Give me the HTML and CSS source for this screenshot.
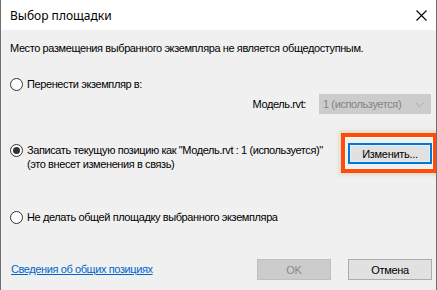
FILE: index.html
```html
<!DOCTYPE html>
<html lang="ru">
<head>
    <meta charset="UTF-8">
    <meta name="viewport" content="width=device-width, initial-scale=1.0">
    <title>Выбор площадки</title>
    <link rel="stylesheet" href="styles.css">
</head>
<body>
    <div class="window">
        <header class="titlebar">
            <span class="title">Выбор площадки</span>
            <svg class="close" width="11" height="11" viewBox="0 0 11 11">
                <path d="M0.5 0.5 L10.5 10.5 M10.5 0.5 L0.5 10.5" stroke="#000" stroke-width="1.1" fill="none"/>
            </svg>
        </header>
        <main class="content">
            <p class="notice">Место размещения выбранного экземпляра не является общедоступным.</p>

            <label class="option option-move">
                <span class="radio"></span>
                <span>Перенести экземпляр в:</span>
            </label>

            <div class="model-row">
                <span class="model-label">Модель.rvt:</span>
                <div class="combo">
                    <span>1 (используется)</span>
                    <svg width="9" height="5" viewBox="0 0 9 5">
                        <path d="M0.5 0.5 L4.5 4.5 L8.5 0.5" stroke="#a8a8a8" fill="none"/>
                    </svg>
                </div>
            </div>

            <div class="record-row">
                <label class="option option-record">
                    <span class="radio checked"></span>
                    <span class="option-text">Записать текущую позицию как "Модель.rvt : 1 (используется)"<br>(это внесет изменения в связь)</span>
                </label>
                <div class="highlight-wrap">
                    <button class="btn btn-focus">Изменить...</button>
                    <span class="highlight"></span>
                </div>
            </div>

            <label class="option option-none">
                <span class="radio"></span>
                <span>Не делать общей площадку выбранного экземпляра</span>
            </label>

            <footer class="footer">
                <a href="#" class="link">Сведения об общих позициях</a>
                <div class="actions">
                    <button class="btn btn-ok" disabled>OK</button>
                    <button class="btn btn-cancel">Отмена</button>
                </div>
            </footer>
        </main>
    </div>
</body>
</html>
```

FILE: styles.css
```css
html {
    box-sizing: border-box;
    font-family: "Liberation Sans", Arial, sans-serif;
    font-size: 11px;
}

*,
*:before,
*:after {
    box-sizing: inherit;
}

body {
    margin: 0;
    background: #f0f0f0;
}

.window {
    width: 437px;
    height: 290px;
    display: flex;
    flex-direction: column;
    border-left: 1px solid #707070;
    border-right: 1px solid #707070;
    overflow: hidden;
}

.titlebar {
    height: 30px;
    flex-shrink: 0;
    background: #fff;
    display: flex;
    align-items: center;
    justify-content: space-between;
    padding: 0 9px 0 9px;
}

.title {
    font-family: "Noto Sans", sans-serif;
    font-size: 12px;
    color: #000;
    margin-top: 1px;
}

.close {
    display: block;
}

.content {
    flex-grow: 1;
    background: #f0f0f0;
    padding: 12px 4px 10px 9px;
    display: flex;
    flex-direction: column;
    color: #000;
    letter-spacing: -0.4px;
}

.notice {
    margin: 0;
    line-height: 13px;
}

.option {
    display: flex;
    align-items: center;
    gap: 4px;
    line-height: 13px;
}

.option-move {
    margin-top: 23px;
}

.radio {
    width: 13px;
    height: 13px;
    flex-shrink: 0;
    border: 1px solid #333;
    border-radius: 50%;
    background: #fff;
    display: flex;
    align-items: center;
    justify-content: center;
}

.radio.checked:after {
    content: "";
    width: 7px;
    height: 7px;
    border-radius: 50%;
    background: #333;
}

.model-row {
    margin-top: 3px;
    display: flex;
    justify-content: flex-end;
    align-items: center;
    gap: 13px;
}

.combo {
    width: 112px;
    height: 20px;
    margin-right: 1px;
    background: #cccccc;
    color: #838383;
    display: flex;
    align-items: center;
    justify-content: space-between;
    padding: 0 7px 0 4px;
}

.record-row {
    margin-top: 29px;
    display: flex;
    justify-content: space-between;
    align-items: flex-start;
}

.option-record {
    align-items: flex-start;
    line-height: 14px;
}

.option-record .radio {
    margin-top: 1px;
}

.highlight-wrap {
    position: relative;
}

.highlight {
    position: absolute;
    left: -7px;
    top: -10px;
    width: 96px;
    height: 40px;
    border: 4px solid #ff4b0d;
    box-shadow: inset 0 0 0 1px #fffaea, 0 0 4px 2px rgba(205, 196, 150, .45);
}

.btn {
    font-family: "Liberation Sans", Arial, sans-serif;
    font-size: 11px;
    letter-spacing: -0.3px;
    height: 21px;
    width: 84px;
    padding: 0;
    background: #e1e1e1;
    border: 1px solid #adadad;
    color: #000;
}

.btn-focus {
    border: 2px solid #0078d7;
    box-shadow: inset 0 0 0 1px #e8eef5;
}

.option-none {
    margin-top: 40px;
}

.footer {
    margin-top: auto;
    display: flex;
    justify-content: space-between;
    align-items: center;
}

.link {
    color: #0066cc;
    margin-left: 1px;
    margin-bottom: 2px;
}

.actions {
    display: flex;
    gap: 17px;
}

.btn-ok {
    width: 74px;
    background: #cccccc;
    border-color: #bfbfbf;
    color: #8a8a8a;
}
```
